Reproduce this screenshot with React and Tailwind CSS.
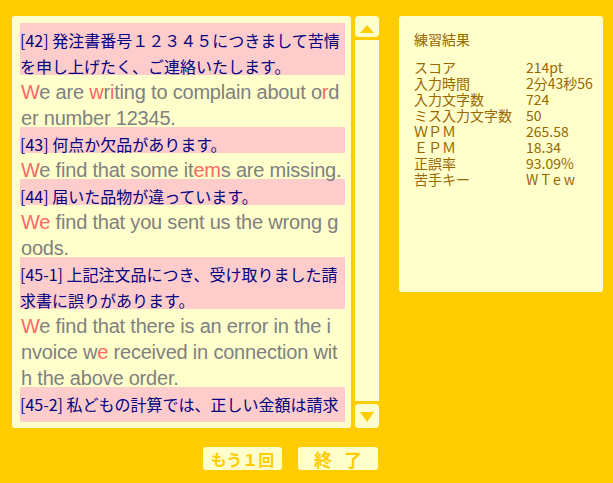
const JP = "font-['Noto_Sans_CJK_JP',sans-serif]";
const EN = "font-['Liberation_Sans',Arial,'Noto_Sans_CJK_JP',sans-serif]";

// {x} marks a mistyped (red) piece of the English line
const BLOCKS = [
  { jp: ["[42] 発注書番号１２３４５につきまして苦情", "を申し上げたく、ご連絡いたします。"] },
  { en: ["{W}e are {w}r{i}ting to complain about o{r}d", "er number 12345."] },
  { jp: ["[43] 何点か欠品があります。"] },
  { en: ["{W}e find that some it{em}s are missing."] },
  { jp: ["[44] 届いた品物が違っています。"] },
  { en: ["{We} find that you sent us the wrong g", "oods."] },
  { jp: ["[45-1] 上記注文品につき、受け取りました請", "求書に誤りがあります。"] },
  {
    en: [
      "{W}e find that there is an error in the i",
      "nvoice w{e} received in connection wit",
      "h the above order.",
    ],
  },
  { jp: ["[45-2] 私どもの計算では、正しい金額は請求", "書記載の金額よりも少ないはずです。"] },
];

const RESULTS = [
  ["スコア", "214pt"],
  ["入力時間", "2分43秒56"],
  ["入力文字数", "724"],
  ["ミス入力文字数", "50"],
  ["ＷＰＭ", "265.58"],
  ["ＥＰＭ", "18.34"],
  ["正誤率", "93.09%"],
  ["苦手キー", "W T e w"],
];

function EnLine({ text }) {
  const parts = text.split(/(\{[^}]*\})/).filter(Boolean);
  return (
    <div className="whitespace-pre">
      {parts.map((p, i) =>
        p.startsWith("{") ? (
          <span key={i} className="text-[#ff6666]">
            {p.slice(1, -1)}
          </span>
        ) : (
          <span key={i}>{p}</span>
        )
      )}
    </div>
  );
}

export default function App() {
  return (
    <div className="flex h-[483px] w-[613px] bg-[#ffcc00] pl-[12px] pt-[16px]">
      {/* Left: text list + scrollbar + buttons */}
      <div className="flex w-[367px] flex-col">
        <div className="flex h-[412px] gap-[4px]">
          <div className="w-[339px] rounded-[3px] bg-[#ffffcc] pb-[6px] pl-[8px] pr-[6px] pt-[7px]">
            <div className="h-full overflow-hidden">
              {BLOCKS.map((b, i) =>
                b.jp ? (
                  <div
                    key={i}
                    className={`${JP} -mb-[4px] bg-[#ffcccc] pt-[4px] text-[16px] leading-[26px] text-[#000080]`}
                  >
                    {b.jp.map((l, j) => (
                      <div key={j} className="whitespace-nowrap">
                        {l}
                      </div>
                    ))}
                  </div>
                ) : (
                  <div
                    key={i}
                    className={`${EN} -mb-[4px] bg-[#ffffcc] pl-[1px] pt-[4px] text-[20px] leading-[26px] tracking-[-0.2px] text-[#808080]`}
                  >
                    {b.en.map((l, j) => (
                      <EnLine key={j} text={l} />
                    ))}
                  </div>
                )
              )}
            </div>
          </div>

          {/* Scrollbar */}
          <div className="flex w-[24px] flex-col">
            <div className="flex h-[21px] justify-center rounded-[4px] bg-[#ffffcc] pt-[9px]">
              <svg width="14" height="8" viewBox="0 0 14 8">
                <path d="M7 0L14 8H0Z" fill="#ffcc00" />
              </svg>
            </div>
            <div className="mt-[3px] flex-1 bg-[#ffffcc]" />
            <div className="mt-[3px] flex h-[24px] justify-center rounded-[4px] bg-[#ffffcc] pt-[8px]">
              <svg width="14" height="10" viewBox="0 0 14 10">
                <path d="M0 0H14L7 10Z" fill="#ffcc00" />
              </svg>
            </div>
          </div>
        </div>

        <div className={`${JP} mt-[19px] flex justify-end gap-[16px] pr-[1px] font-bold text-[#ffcc00]`}>
          <button className="flex h-[23px] w-[79px] items-center justify-center rounded-[3px] bg-[#ffffcc] text-[16px] leading-none">
            もう１回
          </button>
          <button className="flex h-[23px] w-[80px] items-center justify-center gap-[12px] rounded-[3px] bg-[#ffffcc] text-[18px] leading-none">
            <span>終</span>
            <span>了</span>
          </button>
        </div>
      </div>

      {/* Right: results */}
      <div className={`${JP} ml-[20px] h-[276px] w-[204px] rounded-[3px] bg-[#ffffcc] pl-[15px] pt-[15px] text-[14px] leading-[16px] text-[#996600]`}>
        <div>練習結果</div>
        <div className="mt-[12px]">
          {RESULTS.map(([k, v]) => (
            <div key={k} className="flex h-[16px]">
              <span className="w-[112px]">{k}</span>
              <span className="whitespace-pre">{v}</span>
            </div>
          ))}
        </div>
      </div>
    </div>
  );
}
